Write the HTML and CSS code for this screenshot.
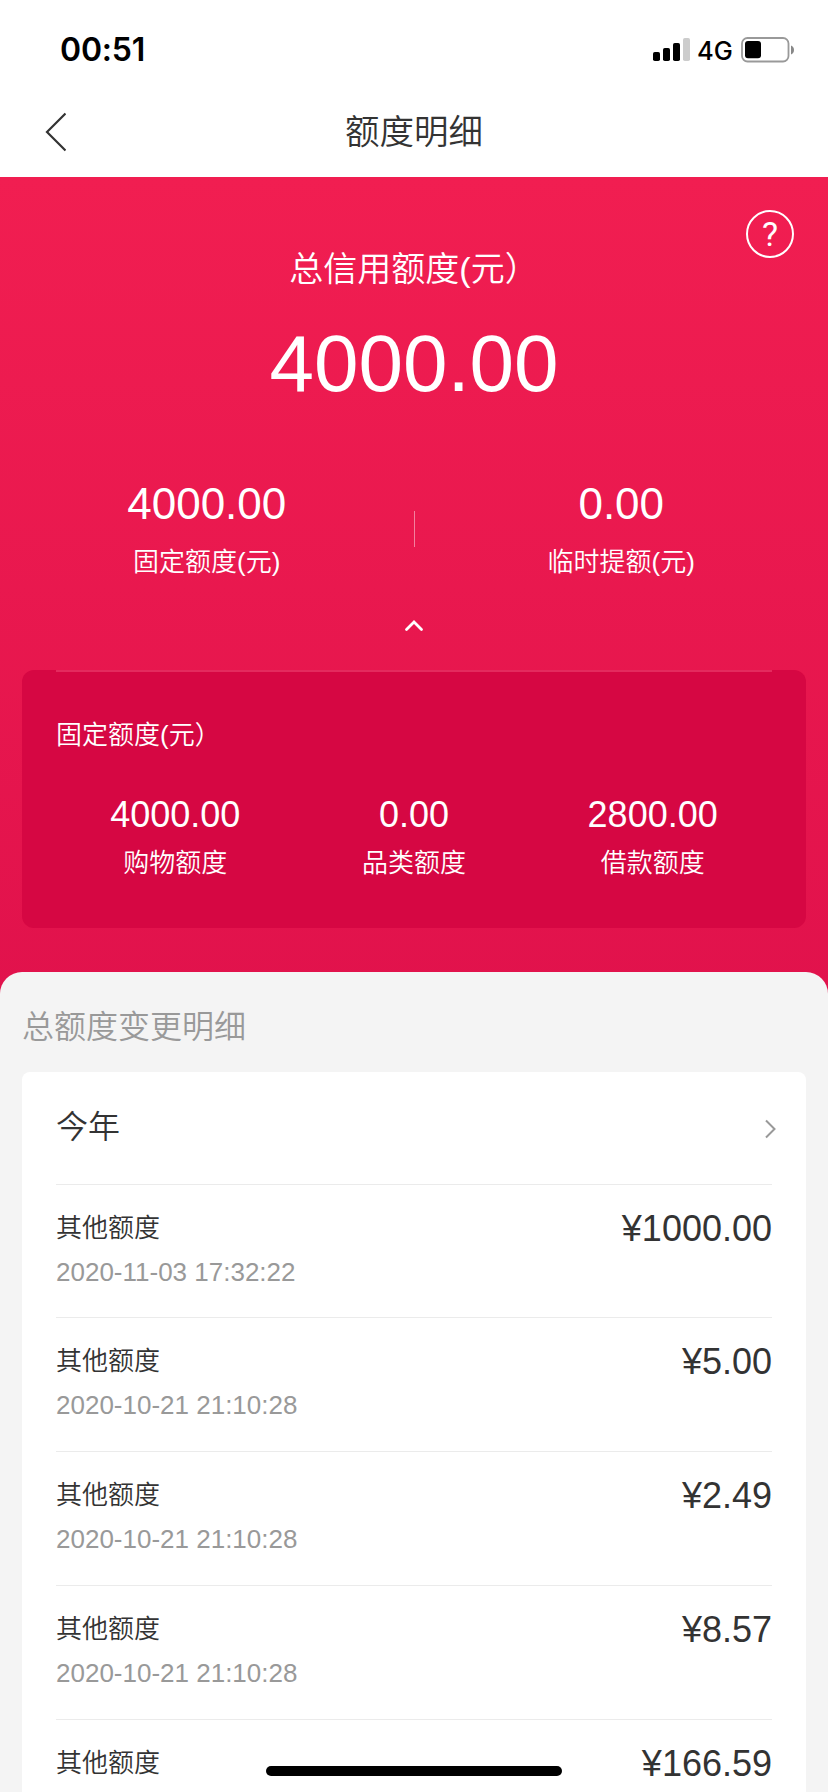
FILE: index.html
```html
<!DOCTYPE html>
<html lang="zh-CN">
<head>
<meta charset="utf-8">
<title>额度明细</title>
<link rel="stylesheet" href="styles.css">
</head>
<body>
<div class="screen">
  <div class="status">
    <span class="time">00:51</span>
    <div class="indicators">
      <svg class="signal" width="37" height="23" viewBox="0 0 37 23">
        <rect x="0" y="14" width="7" height="9" rx="1.8"/>
        <rect x="10" y="10" width="7" height="13" rx="1.8"/>
        <rect x="20" y="5" width="7" height="18" rx="1.8"/>
        <rect x="30" y="0" width="7" height="23" rx="1.8" fill="#ccc"/>
      </svg>
      <span class="network">4G</span>
      <svg class="battery" width="54" height="26" viewBox="0 0 54 26">
        <rect x="1" y="1" width="46.5" height="23.5" rx="5.5" fill="none" stroke="#999" stroke-width="1.8"/>
        <rect x="4" y="4" width="16" height="17.3" rx="3"/>
        <path d="M50 8.500c4 1.500 4 7.500 0 9z" fill="#888"/>
      </svg>
    </div>
  </div>
  <header class="nav">
    <svg class="back" width="21" height="40" viewBox="0 0 21 40"><path d="M20.500 1.500 2 20 20.500 38.500" fill="none" stroke="#333" stroke-width="2.2"/></svg>
    <h1 class="nav-title">额度明细</h1>
  </header>
  <main class="hero">
    <div class="help">?</div>
    <div class="total-label">总信用额度(元）</div>
    <div class="total">4000.00</div>
    <div class="split">
      <div class="half"><div class="half-num">4000.00</div><div class="label">固定额度(元)</div></div>
      <div class="bar"></div>
      <div class="half"><div class="half-num">0.00</div><div class="label">临时提额(元)</div></div>
    </div>
    <svg class="collapse" width="20" height="14" viewBox="0 0 20 14"><path d="M2.500 11.500 10 4 17.500 11.500" fill="none" stroke="#fff" stroke-width="2.8" stroke-linecap="round"/></svg>
    <section class="panel">
      <div class="panel-title">固定额度(元）</div>
      <div class="cols">
        <div><div class="col-num">4000.00</div><div class="label">购物额度</div></div>
        <div><div class="col-num">0.00</div><div class="label">品类额度</div></div>
        <div><div class="col-num">2800.00</div><div class="label">借款额度</div></div>
      </div>
    </section>
  </main>
  <section class="sheet">
    <h2 class="sheet-title">总额度变更明细</h2>
    <div class="card">
      <div class="year">今年
        <svg class="arrow" width="13" height="20" viewBox="0 0 13 20"><path d="M2 1.500 10.500 10 2 18.500" fill="none" stroke="#999" stroke-width="2"/></svg>
      </div>
      <div class="row"><div><div class="name">其他额度</div><div class="date">2020-11-03 17:32:22</div></div><div class="amount">¥1000.00</div></div>
      <div class="row"><div><div class="name">其他额度</div><div class="date">2020-10-21 21:10:28</div></div><div class="amount">¥5.00</div></div>
      <div class="row"><div><div class="name">其他额度</div><div class="date">2020-10-21 21:10:28</div></div><div class="amount">¥2.49</div></div>
      <div class="row"><div><div class="name">其他额度</div><div class="date">2020-10-21 21:10:28</div></div><div class="amount">¥8.57</div></div>
      <div class="row"><div><div class="name">其他额度</div></div><div class="amount">¥166.59</div></div>
    </div>
  </section>
  <div class="home"></div>
</div>
</body>
</html>
```
FILE: styles.css
```css
* { box-sizing: border-box; }
body {
  margin: 0;
  background: #fff;
  color: #333;
  font-family: "Liberation Sans", "Noto Sans CJK SC", sans-serif;
}
h1, h2 { margin: 0; font-weight: 350; }
svg { display: block; }
.screen {
  position: relative;
  display: flex;
  flex-direction: column;
  width: 828px;
  height: 1792px;
  overflow: hidden;
}
.status {
  display: flex;
  justify-content: space-between;
  height: 88px;
  padding: 0 33px 0 60px;
  color: #000;
  font-family: Inter, sans-serif;
}
.time { font-size: 32px; font-weight: 600; line-height: 40px; padding-top: 30px; letter-spacing: -.2px; }
.indicators { display: flex; align-items: flex-start; padding-top: 37px; }
.signal { margin-top: 1px; }
.network { width: 51px; padding-left: 7px; font-size: 25.5px; font-weight: 500; line-height: 27px; }
.nav {
  display: flex;
  align-items: flex-start;
  height: 89px;
  padding-left: 45px;
}
.back { margin-top: 24px; }
.nav-title { flex: 1; padding: 19px 66px 0 0; text-align: center; font-size: 34.5px; line-height: 50px; }
.hero {
  position: relative;
  flex: none;
  height: 820px;
  padding: 72px 22px 0;
  background: linear-gradient(#f11e51, #e1124c);
  color: #fff;
  text-align: center;
}
.help {
  position: absolute;
  top: 33px;
  right: 34px;
  width: 48px;
  height: 48px;
  border: 2px solid #fff;
  border-radius: 50%;
  font: 400 34px/45px Roboto, sans-serif;
}
.total-label { font-size: 34px; font-weight: 350; line-height: 40px; }
.total { margin-top: 27px; font-size: 80px; line-height: 96px; }
.split { display: flex; align-items: flex-start; margin: 65px -22px 0; }
.half { flex: 1; }
.half-num { padding-top: 1px; font-size: 44px; line-height: 52px; }
.half .label { margin-top: 14px; }
.label { font-size: 26px; font-weight: 350; line-height: 36px; }
.bar { width: 1px; height: 36px; margin-top: 34px; background: rgba(255, 255, 255, .45); }
.collapse { margin: 38px auto 38px; }
.panel {
  height: 258px;
  padding: 0 34px;
  background: #d60743;
  border-radius: 12px;
}
.panel::before { content: ""; display: block; height: 1px; background: #e42a5e; }
.panel-title { padding-top: 46px; text-align: left; font-size: 26px; font-weight: 350; line-height: 36px; }
.cols { display: grid; grid-template-columns: repeat(3, 1fr); margin-top: 40px; }
.col-num { font-size: 36px; line-height: 44px; }
.cols .label { margin-top: 8px; }
.sheet {
  position: relative;
  flex: none;
  height: 820px;
  margin-top: -25px;
  padding: 34px 22px 0;
  background: #f4f4f4;
  border-radius: 22px 22px 0 0;
}
.sheet-title { color: #999; font-size: 32px; line-height: 42px; }
.card { height: 740px; margin-top: 24px; padding: 0 34px; background: #fff; border-radius: 8px; }
.year {
  display: flex;
  justify-content: space-between;
  height: 111.6px;
  padding-top: 34px;
  font-size: 32px;
  font-weight: 350;
  line-height: 42px;
}
.arrow { margin: 13px -5px 0 0; }
.row {
  display: flex;
  justify-content: space-between;
  height: 133.75px;
  padding-top: 24px;
  border-top: 1px solid #ebebeb;
}
.name { font-size: 26px; font-weight: 350; line-height: 38px; }
.date { margin-top: 7px; color: #999; font-size: 26px; line-height: 36px; }
.amount { font-size: 36px; line-height: 40px; }
.panel::before { height: 2px; margin-bottom: -1px; }
.home {
  position: absolute;
  left: 266px;
  bottom: 16px;
  width: 296px;
  height: 10px;
  border-radius: 5px;
  background: #000;
}
```
